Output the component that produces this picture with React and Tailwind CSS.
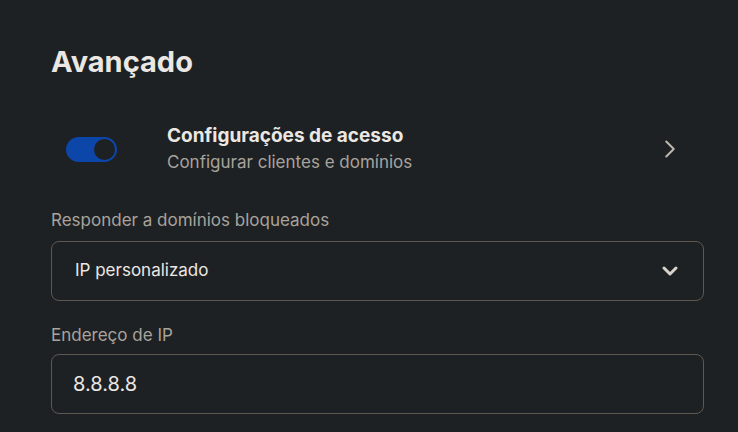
import { ChevronRight, ChevronDown } from "lucide-react";

const App = () => {
  return (
    <div
      className="min-h-screen w-full bg-[#1e2123] text-[#ebe7e3]"
      style={{ fontFamily: "Inter, 'Noto Sans', sans-serif" }}
    >
      <div className="w-[653px] ml-[51px] pt-[44px]">
        <h1 className="text-[29px] leading-[36px] font-bold text-[#ebe7e3]">Avançado</h1>

        <div className="mt-[24px] flex items-center h-[90px]">
          <div className="w-[116px] pl-[15px] flex items-center">
            <div className="w-[51px] h-[25px] rounded-full bg-[#0c46a8] flex items-center justify-end pr-[2px]">
              <div className="w-[21px] h-[21px] rounded-full bg-[#1e2123]" />
            </div>
          </div>
          <div className="flex-1">
            <div className="text-[19px] leading-[24px] font-bold text-[#ebe7e3]">
              Configurações de acesso
            </div>
            <div className="text-[17px] leading-[24px] text-[#a8a39d] mt-[2px]">
              Configurar clientes e domínios
            </div>
          </div>
          <ChevronRight className="w-[30px] h-[30px] text-[#bdb7b0] mr-[19px]" strokeWidth={1.6} />
        </div>

        <div className="mt-[14px] text-[17px] leading-[24px] text-[#a8a39d]">
          Responder a domínios bloqueados
        </div>
        <div className="mt-[9px] h-[60px] rounded-[8px] border border-[#5e5851] flex items-center justify-between pl-[23px] pr-[21px]">
          <span className="text-[17px] text-[#ebe7e3]">IP personalizado</span>
          <ChevronDown className="w-[24px] h-[24px] text-[#d8d3cd]" strokeWidth={3} />
        </div>

        <div className="mt-[22px] text-[17px] leading-[24px] text-[#a8a39d]">Endereço de IP</div>
        <div className="mt-[7px] h-[60px] rounded-[8px] border border-[#5e5851] flex items-center pl-[21px]">
          <span className="text-[20px] text-[#ebe7e3]">8.8.8.8</span>
        </div>
      </div>
    </div>
  );
};

export default App;
